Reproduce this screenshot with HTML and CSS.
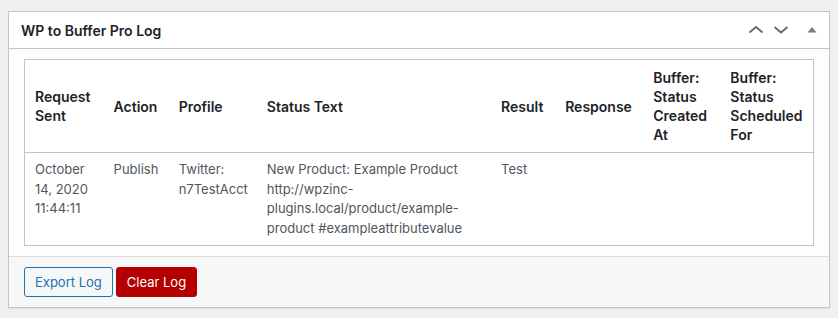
FILE: index.html
```html
<!DOCTYPE html>
<html lang="en">
<head>
    <meta charset="UTF-8">
    <meta name="viewport" content="width=device-width, initial-scale=1.0">
    <title>WP to Buffer Pro Log</title>
    <link rel="stylesheet" href="styles.css">
</head>
<body>
    <div class="postbox">
        <div class="postbox-header">
            <h2>WP to Buffer Pro Log</h2>
            <div class="handle-actions">
                <button class="handle" aria-label="Move up">
                    <svg width="16" height="10" viewBox="0 0 16 10"><path d="M1.5 7.5 L8 2 L14.5 7.5" fill="none" stroke="#646970" stroke-width="1.8"/></svg>
                </button>
                <button class="handle" aria-label="Move down">
                    <svg width="16" height="10" viewBox="0 0 16 10"><path d="M1.5 2 L8 7.5 L14.5 2" fill="none" stroke="#646970" stroke-width="1.8"/></svg>
                </button>
                <button class="handle toggle" aria-label="Toggle panel">
                    <svg width="10" height="8" viewBox="0 0 10 8"><path d="M0.5 6.5 L5 1 L9.5 6.5 Z" fill="#787c82"/></svg>
                </button>
            </div>
        </div>

        <div class="inside">
            <table class="log-table">
                <colgroup>
                    <col style="width: 79px">
                    <col style="width: 65px">
                    <col style="width: 88px">
                    <col style="width: 234px">
                    <col style="width: 64px">
                    <col style="width: 88px">
                    <col style="width: 77px">
                    <col style="width: 93px">
                </colgroup>
                <thead>
                    <tr>
                        <th>Request Sent</th>
                        <th>Action</th>
                        <th>Profile</th>
                        <th>Status Text</th>
                        <th>Result</th>
                        <th>Response</th>
                        <th>Buffer: Status Created At</th>
                        <th>Buffer: Status Scheduled For</th>
                    </tr>
                </thead>
                <tbody>
                    <tr>
                        <td>October 14, 2020 11:44:11</td>
                        <td>Publish</td>
                        <td>Twitter: n7TestAcct</td>
                        <td>New Product: Example Product http://wpzinc-plugins.local/product/example-product #exampleattributevalue</td>
                        <td>Test</td>
                        <td></td>
                        <td></td>
                        <td></td>
                    </tr>
                </tbody>
            </table>
        </div>

        <div class="postbox-footer">
            <a href="#" class="button">Export Log</a>
            <a href="#" class="button button-red">Clear Log</a>
        </div>
    </div>
</body>
</html>
```

FILE: styles.css
```css
body {
    font-family: Inter, "Noto Sans", sans-serif;
    background-color: #f0f0f1;
    color: #3c434a;
    margin: 0;
    padding: 11px 8px;
}
.postbox {
    background-color: #fff;
    border: 1px solid #c3c4c7;
    box-shadow: 0 1px 1px rgba(0, 0, 0, 0.04);
}
.postbox-header {
    display: flex;
    justify-content: space-between;
    align-items: center;
    height: 36px;
    border-bottom: 1px solid #c3c4c7;
}
.postbox-header h2 {
    margin: 0;
    padding: 0 12px;
    font-size: 14px;
    font-weight: 600;
    color: #1d2327;
}
.handle-actions {
    display: flex;
    align-items: center;
    padding-right: 2px;
}
.handle {
    display: flex;
    justify-content: center;
    align-items: center;
    width: 24px;
    height: 36px;
    padding: 0;
    margin-left: 1px;
    border: 0;
    background: none;
    cursor: pointer;
}
.handle.toggle {
    width: 30px;
    margin-left: 4px;
}
.inside {
    background-color: #fdfdfd;
    padding: 10px 15px;
}
.log-table {
    width: 100%;
    table-layout: fixed;
    border-collapse: collapse;
    border: 1px solid #c3c4c7;
    background-color: #fff;
}
.log-table th {
    padding: 8px 6px 8px 10px;
    font-size: 14px;
    font-weight: 600;
    line-height: 19px;
    color: #1d2327;
    text-align: left;
    vertical-align: middle;
    border-bottom: 1px solid #c3c4c7;
}
.log-table td {
    padding: 7px 4px 7px 10px;
    font-size: 13px;
    line-height: 19.5px;
    color: #50575e;
    vertical-align: top;
}
.postbox-footer {
    background-color: #f6f7f7;
    border-top: 1px solid #dcdcde;
    padding: 10px 15px;
    display: flex;
    gap: 3px;
}
.button {
    display: inline-block;
    height: 30px;
    line-height: 28px;
    box-sizing: border-box;
    padding: 0 10px;
    font-size: 13px;
    text-decoration: none;
    color: #2271b1;
    background-color: #f6f7f7;
    border: 1px solid #2271b1;
    border-radius: 3px;
}
.button-red {
    color: #fff;
    background-color: #b30000;
    border-color: #b30000;
}
```
